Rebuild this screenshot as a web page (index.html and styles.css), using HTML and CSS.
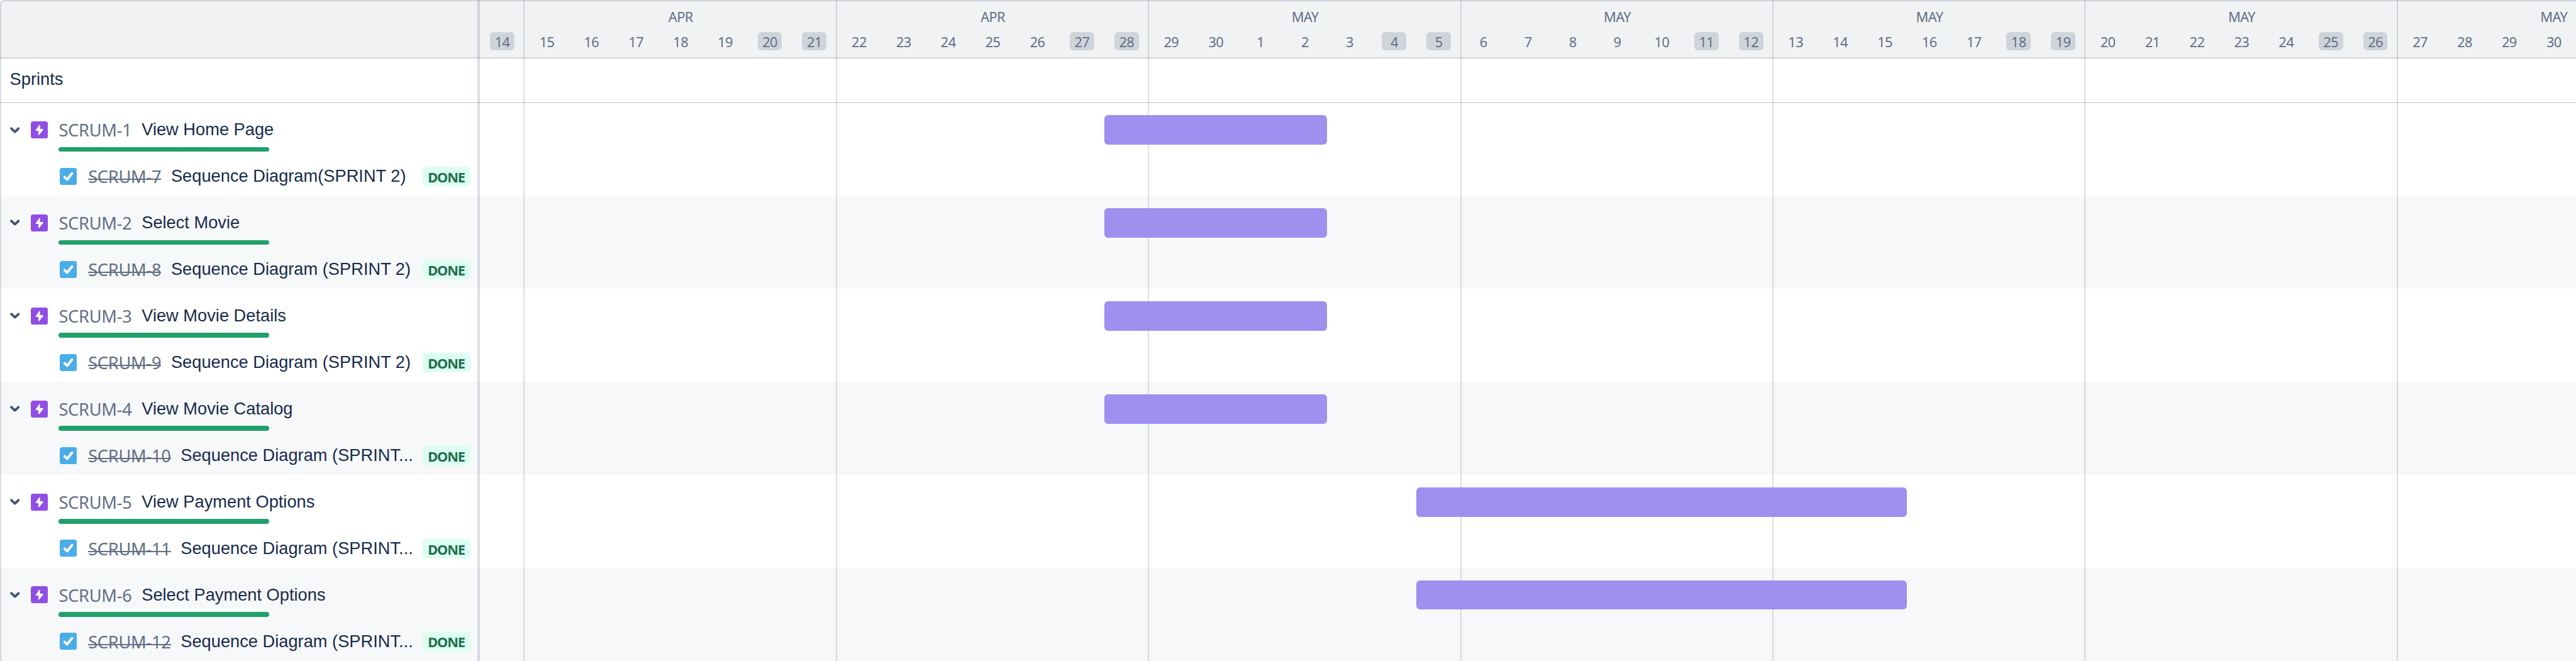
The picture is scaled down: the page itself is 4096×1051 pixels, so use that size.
FILE: index.html
```html
<!DOCTYPE html>
<html lang="en">
<head>
<meta charset="utf-8">
<title>Timeline</title>
<link rel="stylesheet" href="styles.css">
</head>
<body>
<svg class="sprite" aria-hidden="true">
  <symbol id="chevron" viewBox="0 0 16 12"><path d="M2.2 3.4 8 8.800l5.800-5.400" fill="none" stroke="#44546f" stroke-width="4" stroke-linecap="round" stroke-linejoin="round"/></symbol>
  <symbol id="epic" viewBox="0 0 28 28"><rect width="28" height="28" rx="4" fill="#904ee2"/><path d="M13.6 6.2 8 14c-.5.8-.2 1.500.8 1.500H12.300v5.900c0 .9.900 1.200 1.500.4L20 14c.5-.8.200-1.600-.8-1.600H15V6.600c0-1-.9-1.200-1.400-.4z" fill="#fff"/></symbol>
  <symbol id="task" viewBox="0 0 28 28"><rect width="28" height="28" rx="4" fill="#4bade8"/><path d="M8 15l4 4 8-10" fill="none" stroke="#fff" stroke-width="4" stroke-linecap="round" stroke-linejoin="round"/></symbol>
</svg>
<main class="roadmap" id="roadmap">
  <header class="head">
    <div class="head-side"></div>
    <div class="weeks" id="weeks"></div>
  </header>
  <div class="sprints">Sprints</div>
  <div class="rows" id="rows"></div>
  <div class="lines" id="lines"></div>
</main>
<script src="app.js"></script>
</body>
</html>
```
FILE: styles.css
```css
/* 1rem is ten design pixels */
html { font-size: 9.7338px; }
* { box-sizing: border-box; }
body { margin: 0; background: #fff; overflow: hidden; }
.sprite { display: none; }

.roadmap {
  --line: rgba(9, 30, 66, 0.14);
  --day: 7.2857rem;
  position: relative;
  width: 100vw;
  height: 100vh;
  overflow: hidden;
  border-top-left-radius: 0.6rem;
  color: #172b4d;
  font-family: "Liberation Sans", Arial, sans-serif;
  font-size: 2.8rem;
  line-height: 4rem;
  white-space: nowrap;
}
.roadmap::after {
  content: "";
  position: absolute;
  inset: 0;
  border-left: 2px solid var(--line);
  border-top: 2px solid var(--line);
  border-top-left-radius: 0.6rem;
  pointer-events: none;
}

.head {
  display: flex;
  height: 9.6rem;
  background: #f1f2f4;
  border-bottom: 2px solid var(--line);
  color: #626f86;
  font-family: "Noto Sans", sans-serif;
  font-size: 2.25rem;
  line-height: 3rem;
  letter-spacing: -0.07rem;
}
.head-side { flex: none; width: 78.4rem; }
.weeks { display: flex; }
.week {
  flex: none;
  display: flex;
  flex-direction: column;
  justify-content: flex-end;
  gap: 0.95rem;
  width: calc(var(--day) * 7);
  height: 8.2rem;
  text-align: center;
}
.week:first-child { width: var(--day); }
.week-days { display: flex; }
.day { width: var(--day); display: flex; justify-content: center; }
.day-label { width: 4rem; height: 3rem; line-height: 3.3rem; border-radius: 0.6rem; }
.weekend .day-label { background: #cfd4db; }

.sprints {
  height: 7.2rem;
  padding: 1.4rem 0 0 1.6rem;
  border-bottom: 2px solid var(--line);
}

.row { display: flex; height: 15.2rem; }
.row:nth-child(even) { background: #f7f8fa; }
.side { flex: none; width: 78.2rem; padding: 2.4rem 1.4rem 0 1.6rem; }
.epic, .task { display: flex; align-items: center; height: 4rem; }
.chevron { flex: none; width: 1.6rem; height: 1.2rem; margin-right: 1.8rem; }
.icon { flex: none; width: 2.8rem; height: 2.8rem; margin-right: 1.8rem; }
.key {
  font-family: "Noto Sans", sans-serif;
  letter-spacing: -0.028rem;
  color: #626f86;
  margin-right: 1.6rem;
  position: relative;
  top: 0.1rem;
}
.progress { width: 34.4rem; height: 0.8rem; margin: 0.8rem 0 0 8rem; border-radius: 0.4rem; background: #22a06b; }
.task { margin: 2rem 0 0 8.2rem; }
.task .key::after {
  content: "";
  position: absolute;
  left: 0;
  right: 0;
  top: 2.3rem;
  height: 2px;
  background: currentColor;
}
.badge {
  width: 7.8rem;
  height: 3.2rem;
  margin-left: auto;
  border-radius: 0.6rem;
  background: #dcfff1;
  color: #216e4e;
  font: bold 2.25rem/3.4rem "Noto Sans", sans-serif;
  letter-spacing: -0.12rem;
  text-align: center;
}
.track { flex: 1; padding-top: 2rem; }
.bar { position: relative; z-index: 2; height: 4.8rem; border-radius: 0.6rem; background: #9f8fef; }

/* vertical rules laid over the header and rows */
.lines { position: absolute; inset: 0; display: flex; }
.divider { flex: none; width: 78.4rem; border-right: 4px solid var(--line); }
.rule { flex: none; width: calc(var(--day) * 7); border-right: 2px solid var(--line); }
.rule.first { width: 7.31rem; }
```
FILE: app.js
```js
const weeks = [
  ["", [14]],
  ["APR", [15, 16, 17, 18, 19, 20, 21]],
  ["APR", [22, 23, 24, 25, 26, 27, 28]],
  ["MAY", [29, 30, 1, 2, 3, 4, 5]],
  ["MAY", [6, 7, 8, 9, 10, 11, 12]],
  ["MAY", [13, 14, 15, 16, 17, 18, 19]],
  ["MAY", [20, 21, 22, 23, 24, 25, 26]],
  ["MAY", [27, 28, 29, 30]],
];
const day = (n, weekend) =>
  `<div class="day${weekend ? " weekend" : ""}"><span class="day-label">${n}</span></div>`;
document.getElementById("weeks").innerHTML = weeks.map(([month, days], w) =>
  `<div class="week"><div>${month}</div><div class="week-days">${
    days.map((n, i) => day(n, w === 0 || i > 4)).join("")}</div></div>`).join("");

document.getElementById("lines").innerHTML =
  '<div class="divider"></div><div class="rule first"></div>' + '<div class="rule"></div>'.repeat(6);

// bar offsets are measured in rem from the left edge of the track
const short = { start: 102.2, length: 36.4 };
const long = { start: 153.2, length: 80.1 };
const epics = [
  ["SCRUM-1", "View Home Page", "SCRUM-7", "Sequence Diagram(SPRINT 2)", short],
  ["SCRUM-2", "Select Movie", "SCRUM-8", "Sequence Diagram (SPRINT 2)", short],
  ["SCRUM-3", "View Movie Details", "SCRUM-9", "Sequence Diagram (SPRINT 2)", short],
  ["SCRUM-4", "View Movie Catalog", "SCRUM-10", "Sequence Diagram (SPRINT...", short],
  ["SCRUM-5", "View Payment Options", "SCRUM-11", "Sequence Diagram (SPRINT...", long],
  ["SCRUM-6", "Select Payment Options", "SCRUM-12", "Sequence Diagram (SPRINT...", long],
];
document.getElementById("rows").innerHTML = epics.map(([key, title, subKey, subTitle, bar]) => `
  <section class="row">
    <div class="side">
      <div class="epic">
        <svg class="chevron"><use href="#chevron"/></svg>
        <svg class="icon"><use href="#epic"/></svg>
        <span class="key">${key}</span><span>${title}</span>
      </div>
      <div class="progress"></div>
      <div class="task">
        <svg class="icon"><use href="#task"/></svg>
        <span class="key">${subKey}</span><span>${subTitle}</span>
        <span class="badge">DONE</span>
      </div>
    </div>
    <div class="track"><div class="bar" style="margin-left:${bar.start}rem;width:${bar.length}rem"></div></div>
  </section>`).join("");
```
